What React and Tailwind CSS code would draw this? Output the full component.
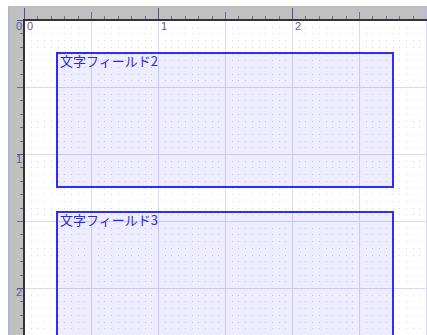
// ============================================
// FORM LAYOUT CANVAS
// Rulers, dotted grid and text-field frames
// ============================================

const UNIT = 134;
const STEP = UNIT / 10;

// Dotted grid + guide lines behind the fields
const CanvasGrid = ({ width, height }) => {
  const dots = [];
  for (let i = 0; i * (UNIT / 20) < width + 2; i++) {
    if (i % 10 === 0) continue;
    for (let j = 0; j * (UNIT / 20) < height + 2; j++) {
      if (j % 10 === 0) continue;
      dots.push(
        <rect
          key={`${i}-${j}`}
          x={Math.round(-1 + i * (UNIT / 20))}
          y={Math.round(-1 + j * (UNIT / 20))}
          width="1"
          height="1"
          fill="#d2d2ee"
        />
      );
    }
  }
  const lines = [];
  for (let k = 1; -1 + k * (UNIT / 2) < width; k++) {
    lines.push(<rect key={`v${k}`} x={Math.round(-1 + k * (UNIT / 2))} y="0" width="1" height={height} fill="#d8d8ff" />);
  }
  for (let k = 1; -1 + k * (UNIT / 2) < height; k++) {
    lines.push(<rect key={`h${k}`} x="0" y={Math.round(-1 + k * (UNIT / 2))} width={width} height="1" fill="#d8d8ff" />);
  }
  return (
    <svg className="absolute left-0 top-0" width={width} height={height}>
      {dots}
      {lines}
    </svg>
  );
};

// Horizontal ruler ticks (origin at local x = 1)
const TopTicks = () => {
  const ticks = [];
  for (let i = 0; i <= 30; i++) {
    const x = Math.round(1 + i * STEP);
    const major = i % 10 === 0;
    const half = i % 5 === 0;
    const y1 = major ? 2 : half ? 6 : 10;
    ticks.push(
      <rect
        key={i}
        x={x}
        y={y1}
        width="1"
        height={13 - y1}
        fill={major && i === 30 ? "#b8b8e8" : major ? "#5050a8" : "#6a6aa2"}
      />
    );
  }
  return (
    <svg className="absolute left-0 top-0" width="404" height="13">
      {ticks}
    </svg>
  );
};

// Vertical ruler ticks (origin at local y = -1)
const LeftTicks = () => {
  const ticks = [];
  for (let i = 1; i <= 24; i++) {
    const y = Math.round(-1 + i * STEP);
    const big = i % 5 === 0;
    const x1 = big ? 7 : 10;
    ticks.push(
      <rect key={i} x={x1} y={y} width={13 - x1} height="1" fill={i % 10 === 0 ? "#5050a8" : "#6a6aa2"} />
    );
  }
  return (
    <svg className="absolute left-0 top-0" width="13" height="314">
      {ticks}
    </svg>
  );
};

const TextField = ({ label, className }) => (
  <div
    className={`absolute left-[31px] w-[338px] border-2 border-[#2e2ef2] bg-[#0000ff12] ${className}`}
  >
    <span className="block pl-[2px] text-[13px] leading-[13px] text-[#2a2ae0] [font-family:'Noto_Sans_CJK_JP','Noto_Sans_CJK_SC',sans-serif]">
      {label}
    </span>
  </div>
);

export default function App() {
  return (
    <div className="w-[427px] h-[335px] overflow-hidden bg-white pl-[8px] pt-[6px] flex flex-col [font-family:'Liberation_Sans',sans-serif]">
      {/* Ruler row */}
      <div className="flex h-[15px] shrink-0">
        <div className="relative w-[15px] shrink-0 bg-[#c0c0c0] border-l-2 border-[#b2b6d2]">
          <div className="absolute left-[7px] top-[14px] w-[6px] h-[1px] bg-[#5050a8]" />
        </div>
        <div className="relative flex-1 bg-[#c0c0c0] border-b-2 border-[#333333]">
          <TopTicks />
        </div>
      </div>

      {/* Body */}
      <div className="flex flex-1 min-h-0">
        <div className="relative w-[15px] shrink-0 bg-[#c0c0c0] border-l-2 border-[#b2b6d2]">
          <LeftTicks />
          <span className="absolute right-[1px] top-0 text-[11px] leading-[11px] text-[#5a5aa2]">0</span>
          <span className="absolute right-[1px] top-[133px] text-[11px] leading-[11px] text-[#5a5aa2]">1</span>
          <span className="absolute right-[1px] top-[266px] text-[11px] leading-[11px] text-[#5a5aa2]">2</span>
        </div>

        <div className="relative flex-1 overflow-hidden border-l-2 border-[#333333]">
          <CanvasGrid width={402} height={314} />

          {/* Ruler labels */}
          <span className="absolute left-[2px] top-0 text-[11px] leading-[11px] text-[#5a5aa2]">0</span>
          <span className="absolute left-[136px] top-0 text-[11px] leading-[11px] text-[#5a5aa2]">1</span>
          <span className="absolute left-[270px] top-0 text-[11px] leading-[11px] text-[#5a5aa2]">2</span>

          {/* Fields */}
          <TextField label="文字フィールド2" className="top-[31px] h-[136px]" />
          <TextField label="文字フィールド3" className="top-[190px] h-[200px]" />
        </div>
      </div>
    </div>
  );
}
